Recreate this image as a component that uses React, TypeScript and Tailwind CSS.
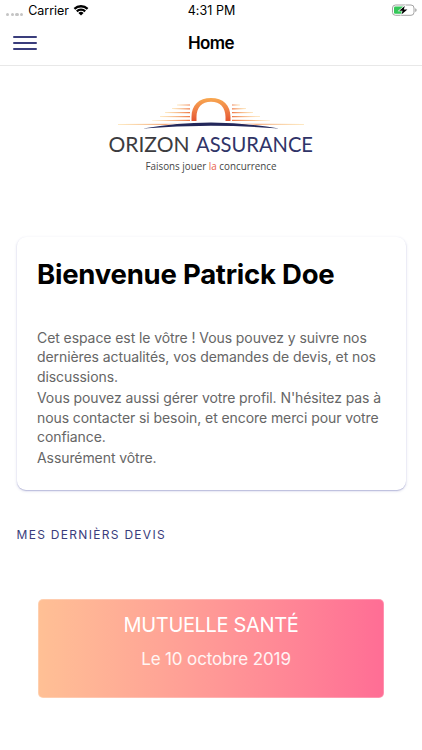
const SPEED_LINES = [
	{ y: 105, left: 177, right: 240 },
	{ y: 108.8, left: 172, right: 246 },
	{ y: 112.7, left: 165, right: 253 },
	{ y: 116.7, left: 160, right: 260 },
	{ y: 120.4, left: 152, right: 270 },
	{ y: 124.3, left: 118, right: 304 },
];

const StatusBar = () => {
	return (
		<div className="grid grid-cols-3 items-center h-5 pl-1.5 pr-[5px] text-[12.5px] text-black">
			<div className="flex items-center gap-[5px]">
				<div className="flex gap-[1.5px] pt-2">
					<span className="size-[3.2px] rounded-full bg-[#c4c4c4]" />
					<span className="size-[3.2px] rounded-full bg-[#c4c4c4]" />
					<span className="size-[3.2px] rounded-full bg-[#c4c4c4]" />
					<span className="size-[3.2px] rounded-full bg-[#c4c4c4]" />
				</div>
				<span className="pt-px whitespace-nowrap tracking-[-0.05px]">Carrier</span>
				<svg className="-ml-px" width="16" height="12" viewBox="0 0 16 12">
					<path d="M.6 4.1a10.6 10.6 0 0 1 14.8 0L13.8 5.8a8.3 8.3 0 0 0-11.6 0Z" />
					<path d="M3 6.6a7.1 7.1 0 0 1 10 0l-1.6 1.6a4.8 4.8 0 0 0-6.8 0Z" />
					<path d="M5.4 9a3.7 3.7 0 0 1 5.2 0L8 11.6Z" />
				</svg>
			</div>
			<span className="pt-[2px] text-center tracking-[0.05px]">4:31 PM</span>
			<svg
				className="justify-self-end"
				width="26"
				height="13"
				viewBox="0 0 26 13"
			>
				<rect x="1.5" y="1" width="21.5" height="10.3" rx="3" fill="none" stroke="#a3a3a3" />
				<path d="M24.2 4.3q1.5.4 1.5 1.8t-1.5 1.8Z" fill="#a3a3a3" />
				<rect x="3" y="2.5" width="9.5" height="7.3" rx="1.3" fill="#35c759" />
				<path
					d="M13.8 1.9 8.2 6.7h3.4L10.4 10.6l6-5h-3.6Z"
					fill="#000"
					stroke="#fff"
					strokeWidth="1.2"
					paintOrder="stroke"
				/>
			</svg>
		</div>
	);
};

const Header = () => {
	return (
		<header className="grid grid-cols-3 items-center h-[46px] px-[13px] border-b border-[#e8e8e8]">
			<button aria-label="Menu" className="flex flex-col gap-1 w-6">
				<span className="h-0.5 w-full rounded-full bg-[#3a3d7c]" />
				<span className="h-0.5 w-full rounded-full bg-[#3a3d7c]" />
				<span className="h-0.5 w-full rounded-full bg-[#3a3d7c]" />
			</button>
			<h1 className="pt-[2px] text-center text-[17px] font-semibold tracking-[-0.6px] text-black">
				Home
			</h1>
		</header>
	);
};

const Logo = () => {
	return (
		<svg className="block mx-auto" width="222" height="90" viewBox="100 90 222 90">
			<defs>
				<linearGradient id="arch" x1="0" y1="0" x2="0" y2="1">
					<stop offset="0" stopColor="#f8a850" />
					<stop offset="0.6" stopColor="#ee7a45" />
					<stop offset="1" stopColor="#e4552f" />
				</linearGradient>
				<linearGradient id="fadeLeft">
					<stop offset="0" stopColor="#fcd48a" />
					<stop offset="1" stopColor="#ee7a48" />
				</linearGradient>
				<linearGradient id="fadeRight">
					<stop offset="0" stopColor="#ee7a48" />
					<stop offset="1" stopColor="#fcd48a" />
				</linearGradient>
			</defs>
			{SPEED_LINES.map(({ y, left, right }) => (
				<g key={y}>
					<path d={`M${left} ${y - 0.2}L190 ${y - 0.6}v1.2L${left} ${y + 0.2}Z`} fill="url(#fadeLeft)" />
					<path d={`M${right} ${y - 0.2}L232 ${y - 0.6}v1.2L${right} ${y + 0.2}Z`} fill="url(#fadeRight)" />
				</g>
			))}
			<path
				d="M191.5 121v-4C191.500 105 199 98 211 98s19.500 7 19.500 19v4h-5v-4c0-9.500-5.300-15.300-14.500-15.300S196.500 107.500 196.500 117v4Z"
				fill="url(#arch)"
			/>
			{/* horizon, outlined in white so that it cuts the lowest rays */}
			<path
				d="M143 128.500Q177 122.500 211 122.500T279 128.500Q245 125.800 211 125.800T143 128.500Z"
				fill="#23275a"
				stroke="#fff"
				strokeWidth="1"
				paintOrder="stroke"
			/>
			<g fontFamily="Lato, sans-serif" fontSize="20.5">
				<text x="108.5" y="152" textLength="81" lengthAdjust="spacingAndGlyphs" fill="#3c3c40">
					ORIZON
				</text>
				<text x="196" y="152" textLength="117" lengthAdjust="spacingAndGlyphs" fill="#303468">
					ASSURANCE
				</text>
			</g>
			<text
				x="145.5"
				y="170"
				textLength="131"
				lengthAdjust="spacingAndGlyphs"
				fontFamily="'Open Sans', sans-serif"
				fontSize="10"
				fill="#454545"
			>
				Faisons jouer <tspan fill="#e8604a">la</tspan> concurrence
			</text>
		</svg>
	);
};

const WelcomeCard = () => {
	return (
		<section className="ml-[17px] mr-4 mt-[57px] h-[253px] rounded-[9px] bg-white px-5 pt-[19px] shadow-[0_1px_3px_rgba(70,75,160,0.22),0_1px_1px_rgba(70,75,160,0.25)]">
			<h2 className="text-[27.5px] leading-9 font-bold tracking-[-0.23px] text-black whitespace-nowrap">
				Bienvenue Patrick Doe
			</h2>
			<div className="mt-9 flex flex-col gap-[2px] text-[14px] leading-[19.4px] tracking-[-0.08px] text-[#666] whitespace-nowrap">
				<p>
					Cet espace est le vôtre ! Vous pouvez y suivre nos
					<br />
					dernières actualités, vos demandes de devis, et nos
					<br />
					discussions.
				</p>
				<p>
					Vous pouvez aussi gérer votre profil. N'hésitez pas à
					<br />
					nous contacter si besoin, et encore merci pour votre
					<br />
					confiance.
				</p>
				<p>Assurément vôtre.</p>
			</div>
		</section>
	);
};

const QuoteCard = () => {
	return (
		<div className="mx-[38px] mt-[55px] h-[99px] rounded-[5px] border border-white/25 bg-linear-to-r from-[#ffc095] to-[#ff6d95] bg-origin-border pt-[11px] text-center text-white">
			<p className="text-[20px] leading-7 tracking-[-0.35px]">MUTUELLE SANTÉ</p>
			<p className="mt-1.5 pl-[10px] text-[17px] leading-7 tracking-[-0.13px] text-white/90">
				Le 10 octobre 2019
			</p>
		</div>
	);
};

const App = () => {
	return (
		<main className="h-[750px] w-[422px] overflow-hidden bg-white font-['Inter',sans-serif]">
			<StatusBar />
			<Header />
			<div className="pt-6">
				<Logo />
			</div>
			<WelcomeCard />
			<h3 className="mt-9 ml-4 pl-[0.5px] text-[12px] leading-[18px] tracking-[1.3px] text-[#3a3d7c]">
				MES DERNIÈRS DEVIS
			</h3>
			<QuoteCard />
		</main>
	);
};

export default App;
